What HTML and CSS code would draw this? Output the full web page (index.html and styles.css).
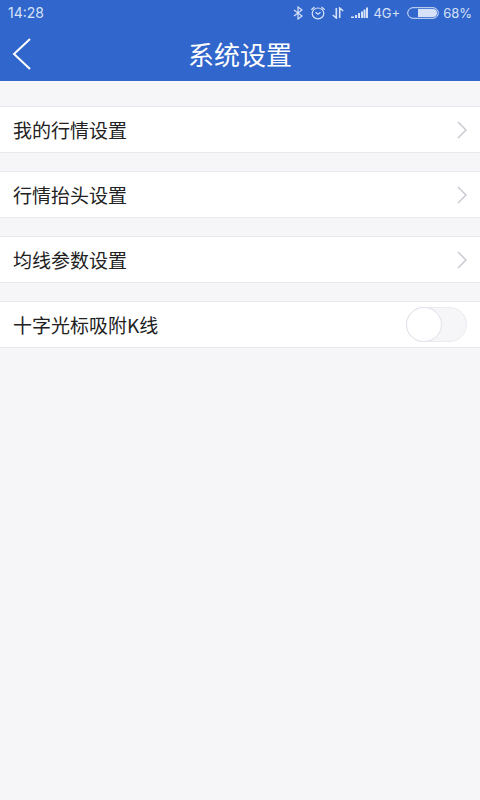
FILE: index.html
```html
<!DOCTYPE html>
<html lang="zh-CN">
<head>
<meta charset="utf-8">
<meta name="viewport" content="width=device-width, initial-scale=1">
<title>系统设置</title>
<link rel="stylesheet" href="styles.css">
</head>
<body>
<header class="top">
  <div class="status">
    <span class="time">14:28</span>
    <div class="indicators">
      <svg class="bluetooth" width="10" height="14" viewBox="0 0 10 14" aria-hidden="true"><path d="M1 4l8 6-4 3V1l4 3-8 6"/></svg>
      <svg class="alarm" width="16" height="14" viewBox="0 0 16 14" aria-hidden="true"><ellipse cx="8" cy="7.4" rx="5.8" ry="5.4"/><path d="M1.300 3.700L4.500 1M14.700 3.700L11.500 1M5.500 6.300L8 8.300l2.500-2"/></svg>
      <svg class="data" width="12" height="12" viewBox="0 0 12 12" aria-hidden="true"><path d="M4.300 1v10L.8 8M7.700 11V1l3.500 3"/></svg>
      <svg class="signal" width="17" height="12" viewBox="0 0 17 12" aria-hidden="true"><path d="M0 9.500h3V11H0zM4 8h2v3H4zM7 6h2v5H7zM10 4.500h2V11h-2zM12.500 2.500h2V11h-2zM15 .5h2V11h-2z"/></svg>
      <span class="network">4G+</span>
      <svg class="battery" width="32" height="12" viewBox="0 0 32 12" aria-hidden="true"><rect x=".7" y=".7" width="30.600" height="10.600" rx="5.300"/><path d="M11 2h15a4 4 0 0 1 0 8H11z"/></svg>
      <span class="level">68%</span>
    </div>
  </div>
  <div class="titlebar">
    <button class="back" type="button" aria-label="返回"><svg width="20" height="32" viewBox="0 0 20 32" aria-hidden="true"><path d="M18 1L2 16l16 15"/></svg></button>
    <h1 class="title">系统设置</h1>
  </div>
</header>
<main class="settings">
  <a class="row" href="#quotes"><span>我的行情设置</span><svg class="chevron" width="10" height="18" viewBox="0 0 10 18" aria-hidden="true"><path d="M1 1l8 8-8 8"/></svg></a>
  <a class="row" href="#columns"><span>行情抬头设置</span><svg class="chevron" width="10" height="18" viewBox="0 0 10 18" aria-hidden="true"><path d="M1 1l8 8-8 8"/></svg></a>
  <a class="row" href="#averages"><span>均线参数设置</span><svg class="chevron" width="10" height="18" viewBox="0 0 10 18" aria-hidden="true"><path d="M1 1l8 8-8 8"/></svg></a>
  <div class="row"><label for="snap">十字光标吸附K线</label><input class="switch" id="snap" type="checkbox" role="switch"></div>
</main>
</body>
</html>
```
FILE: styles.css
```css
*,
*::before {
  box-sizing: border-box;
}

body {
  margin: 0;
  min-height: 100vh;
  background: #f6f6f9;
  color: #222;
  font-family: "Noto Sans CJK SC", sans-serif;
}

svg {
  display: block;
  fill: none;
  stroke: currentColor;
}

.top {
  background: #3166cc;
  color: #fff;
}

.status {
  display: flex;
  align-items: center;
  justify-content: space-between;
  height: 26px;
  padding: 0 8px;
  color: #d7e2f8;
  font: 14px/26px Inter, sans-serif;
}

.indicators {
  display: flex;
  align-items: center;
  font-size: 13px;
}

.bluetooth {
  margin-right: 7px;
}

.alarm {
  margin-right: 6px;
}

.alarm,
.bluetooth {
  stroke-width: 1.2;
}

.data {
  margin-right: 7px;
  stroke-width: 1.6;
}

.signal {
  margin-right: 5px;
  fill: currentColor;
  stroke: none;
}

.network {
  margin-right: 7px;
}

.battery {
  margin-right: 4px;
}

.battery path {
  fill: currentColor;
  stroke: none;
}

.titlebar {
  display: grid;
  grid-template-columns: 52px 1fr 52px;
  align-items: center;
  height: 55px;
}

.back {
  height: 55px;
  padding: 0 0 0 12px;
  border: 0;
  background: none;
  color: #fff;
  stroke-width: 2;
}

.title {
  margin: 0;
  font-size: 26px;
  font-weight: 400;
  line-height: 55px;
  text-align: center;
}

.settings {
  display: flex;
  flex-direction: column;
  gap: 18px;
  padding-top: 25px;
}

.row {
  display: flex;
  align-items: center;
  justify-content: space-between;
  height: 47px;
  padding: 0 13px;
  border: solid #e9e9f0;
  border-width: 1px 0;
  background: #fff;
  color: inherit;
  font-size: 19px;
  line-height: 45px;
  text-decoration: none;
}

.chevron {
  color: #c5c7ce;
  stroke-width: 1.4;
}

.switch {
  appearance: none;
  width: 61px;
  height: 35px;
  margin: 0;
  border: 1px solid #ebebf1;
  border-radius: 18px;
  background: #f6f6f9;
}

.switch::before {
  content: "";
  display: block;
  width: 36px;
  height: 35px;
  margin: -1px;
  border: 1px solid #e2e2ec;
  border-radius: 50%;
  background: #fff;
}

.switch:checked {
  background: #3166cc;
}

.switch:checked::before {
  margin-left: 24px;
}
```
